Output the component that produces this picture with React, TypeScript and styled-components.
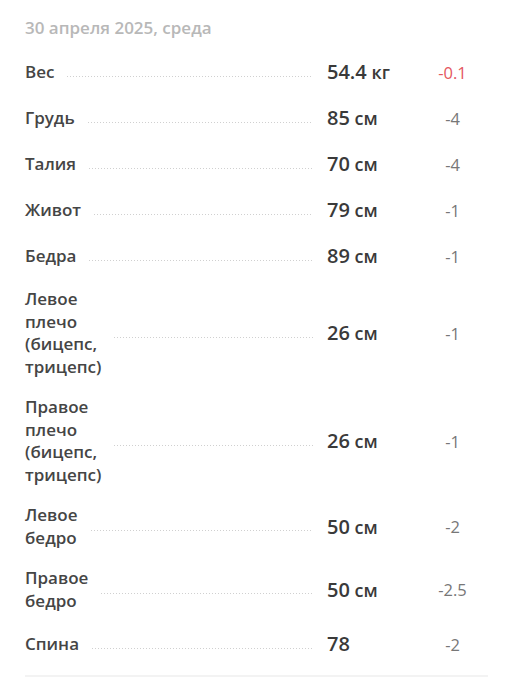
import styled, { createGlobalStyle } from "styled-components";

const GlobalStyle = createGlobalStyle`
    body {
        margin: 0;
        background: #ffffff;
        font-family: "Open Sans", "Noto Sans", sans-serif;
    }
`;

const Container = styled.div`
    width: 463px;
    padding: 16px 0 0 25px;
`;

const DateTitle = styled.div`
    font-size: 17px;
    line-height: 23px;
    font-weight: 600;
    color: #b8b8b8;
    margin-bottom: 10px;
`;

const List = styled.ul`
    list-style: none;
    margin: 0;
    padding: 0;
    border-bottom: 2px solid #f3f3f3;
    padding-bottom: 8px;
`;

const Row = styled.li`
    display: flex;
    align-items: center;
    padding: 9px 0;
`;

const Label = styled.span`
    font-size: 17px;
    line-height: 22.5px;
    font-weight: 600;
    color: #454545;
    white-space: pre-line;
`;

const Leader = styled.span`
    flex: 1;
    height: 1px;
    margin: 8px 14px 0 13px;
    background-image: linear-gradient(to right, #d0d0d0 1px, transparent 1px);
    background-size: 3px 1px;
    background-repeat: repeat-x;
`;

const Value = styled.span`
    width: 90px;
    font-size: 20px;
    line-height: 28px;
    font-weight: 600;
    color: #3a3a3a;
    small {
        font-size: 18px;
    }
`;

const Delta = styled.span<{ $negative?: boolean }>`
    width: 71px;
    text-align: center;
    font-size: 16.5px;
    line-height: 23px;
    color: ${props => props.$negative ? "#e4575e" : "#777777"};
`;

interface IMeasure {
    label: string;
    value: string;
    unit?: string;
    delta: string;
    highlight?: boolean;
}

const measures: IMeasure[] = [
    { label: "Вес", value: "54.4", unit: "кг", delta: "-0.1", highlight: true },
    { label: "Грудь", value: "85", unit: "см", delta: "-4" },
    { label: "Талия", value: "70", unit: "см", delta: "-4" },
    { label: "Живот", value: "79", unit: "см", delta: "-1" },
    { label: "Бедра", value: "89", unit: "см", delta: "-1" },
    { label: "Левое\nплечо\n(бицепс,\nтрицепс)", value: "26", unit: "см", delta: "-1" },
    { label: "Правое\nплечо\n(бицепс,\nтрицепс)", value: "26", unit: "см", delta: "-1" },
    { label: "Левое\nбедро", value: "50", unit: "см", delta: "-2" },
    { label: "Правое\nбедро", value: "50", unit: "см", delta: "-2.5" },
    { label: "Спина", value: "78", delta: "-2" },
];

function App() {
    return (
        <Container>
            <GlobalStyle />
            <DateTitle>30 апреля 2025, среда</DateTitle>
            <List>
                {measures.map((m, i) => (
                    <Row key={i}>
                        <Label>{m.label}</Label>
                        <Leader />
                        <Value>
                            {m.value}
                            {m.unit && <small> {m.unit}</small>}
                        </Value>
                        <Delta $negative={m.highlight}>{m.delta}</Delta>
                    </Row>
                ))}
            </List>
        </Container>
    );
}

export default App;
